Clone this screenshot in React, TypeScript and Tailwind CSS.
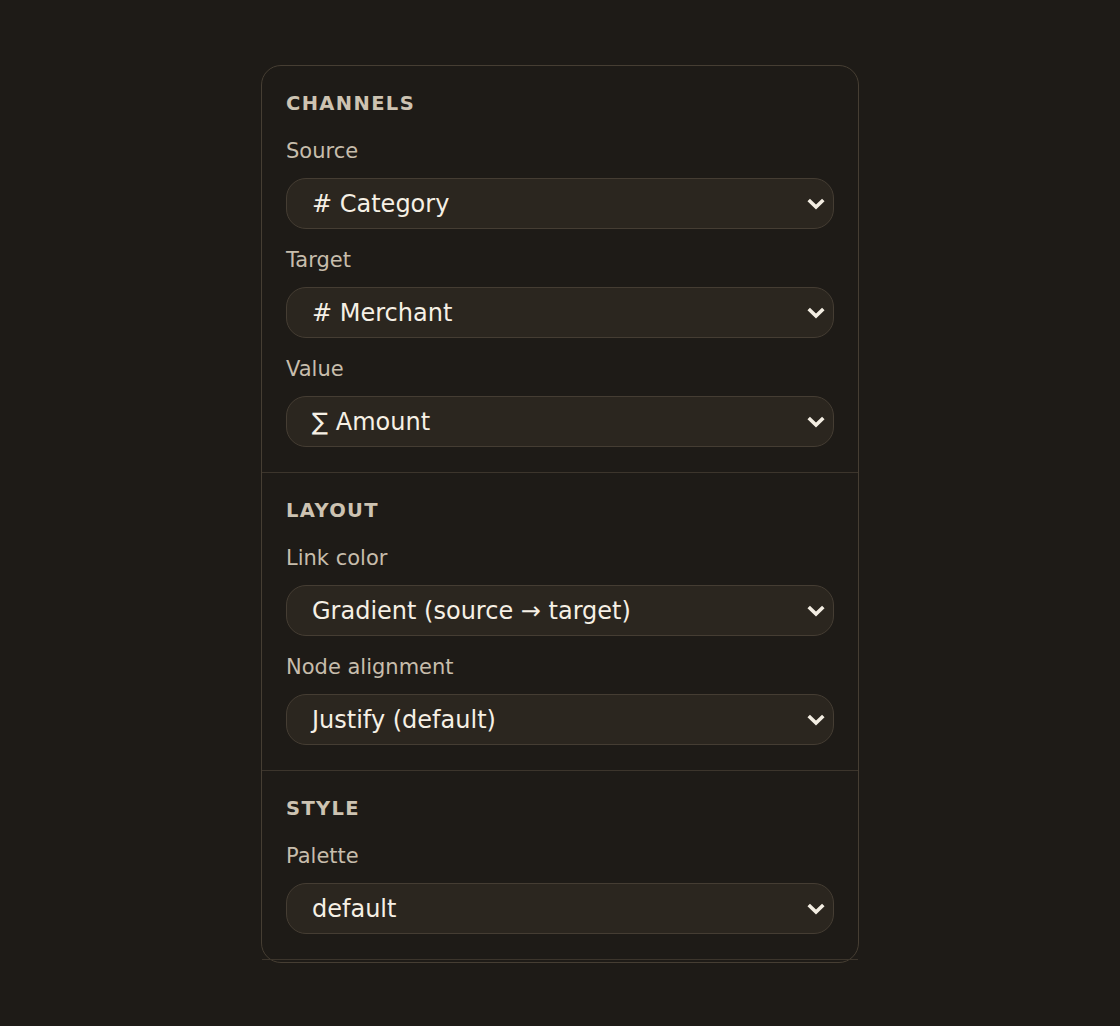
import type { ReactNode } from "react";

const sections = [
  {
    title: "Channels",
    fields: [
      { label: "Source", value: "# Category" },
      { label: "Target", value: "# Merchant" },
      { label: "Value", value: "∑ Amount" },
    ],
  },
  {
    title: "Layout",
    fields: [
      { label: "Link color", value: "Gradient (source → target)" },
      { label: "Node alignment", value: "Justify (default)" },
    ],
  },
  {
    title: "Style",
    fields: [{ label: "Palette", value: "default" }],
  },
];

function Chevron() {
  return (
    <svg
      viewBox="0 0 18 12"
      className="pointer-events-none absolute right-[9px] top-1/2 h-[12px] w-[18px] -translate-y-1/2"
      fill="none"
      stroke="#f3ede2"
      strokeWidth="3.6"
      strokeLinecap="square"
      aria-hidden
    >
      <path d="M3 3.2 L9 9 L15 3.2" />
    </svg>
  );
}

function Field({ label, children }: { label: string; children: ReactNode }) {
  return (
    <div className="flex flex-col">
      <label className="mb-3 text-[21px] leading-[30px] text-[#c7bdac]">
        {label}
      </label>
      {children}
    </div>
  );
}

export default function App() {
  return (
    <div
      className="flex min-h-[1026px] items-start justify-center bg-[#1e1b17] pt-[65px]"
      style={{ fontFamily: '"DejaVu Sans", sans-serif' }}
    >
      <div className="flex w-[598px] flex-col rounded-[20px] border border-[#463e33] bg-[#1e1b17] pb-[2px]">
        {sections.map((s) => (
          <section
            key={s.title}
            className="border-b border-[#3c352c] px-6 pb-[25px] pt-6"
          >
            <h2 className="mb-5 mt-px text-[19.5px] font-bold uppercase leading-[25px] tracking-[0.07em] text-[#cdc3b2]">
              {s.title}
            </h2>
            <div className="flex flex-col gap-4">
              {s.fields.map((f) => (
                <Field key={f.label} label={f.label}>
                  <div className="relative">
                    <div className="flex h-[51px] items-center rounded-[20px] border-[1.5px] border-[#453d33] bg-[#2b261f] pl-[25px] text-[24px] text-[#f6f0e5]">
                      {f.value}
                    </div>
                    <Chevron />
                  </div>
                </Field>
              ))}
            </div>
          </section>
        ))}
      </div>
    </div>
  );
}
